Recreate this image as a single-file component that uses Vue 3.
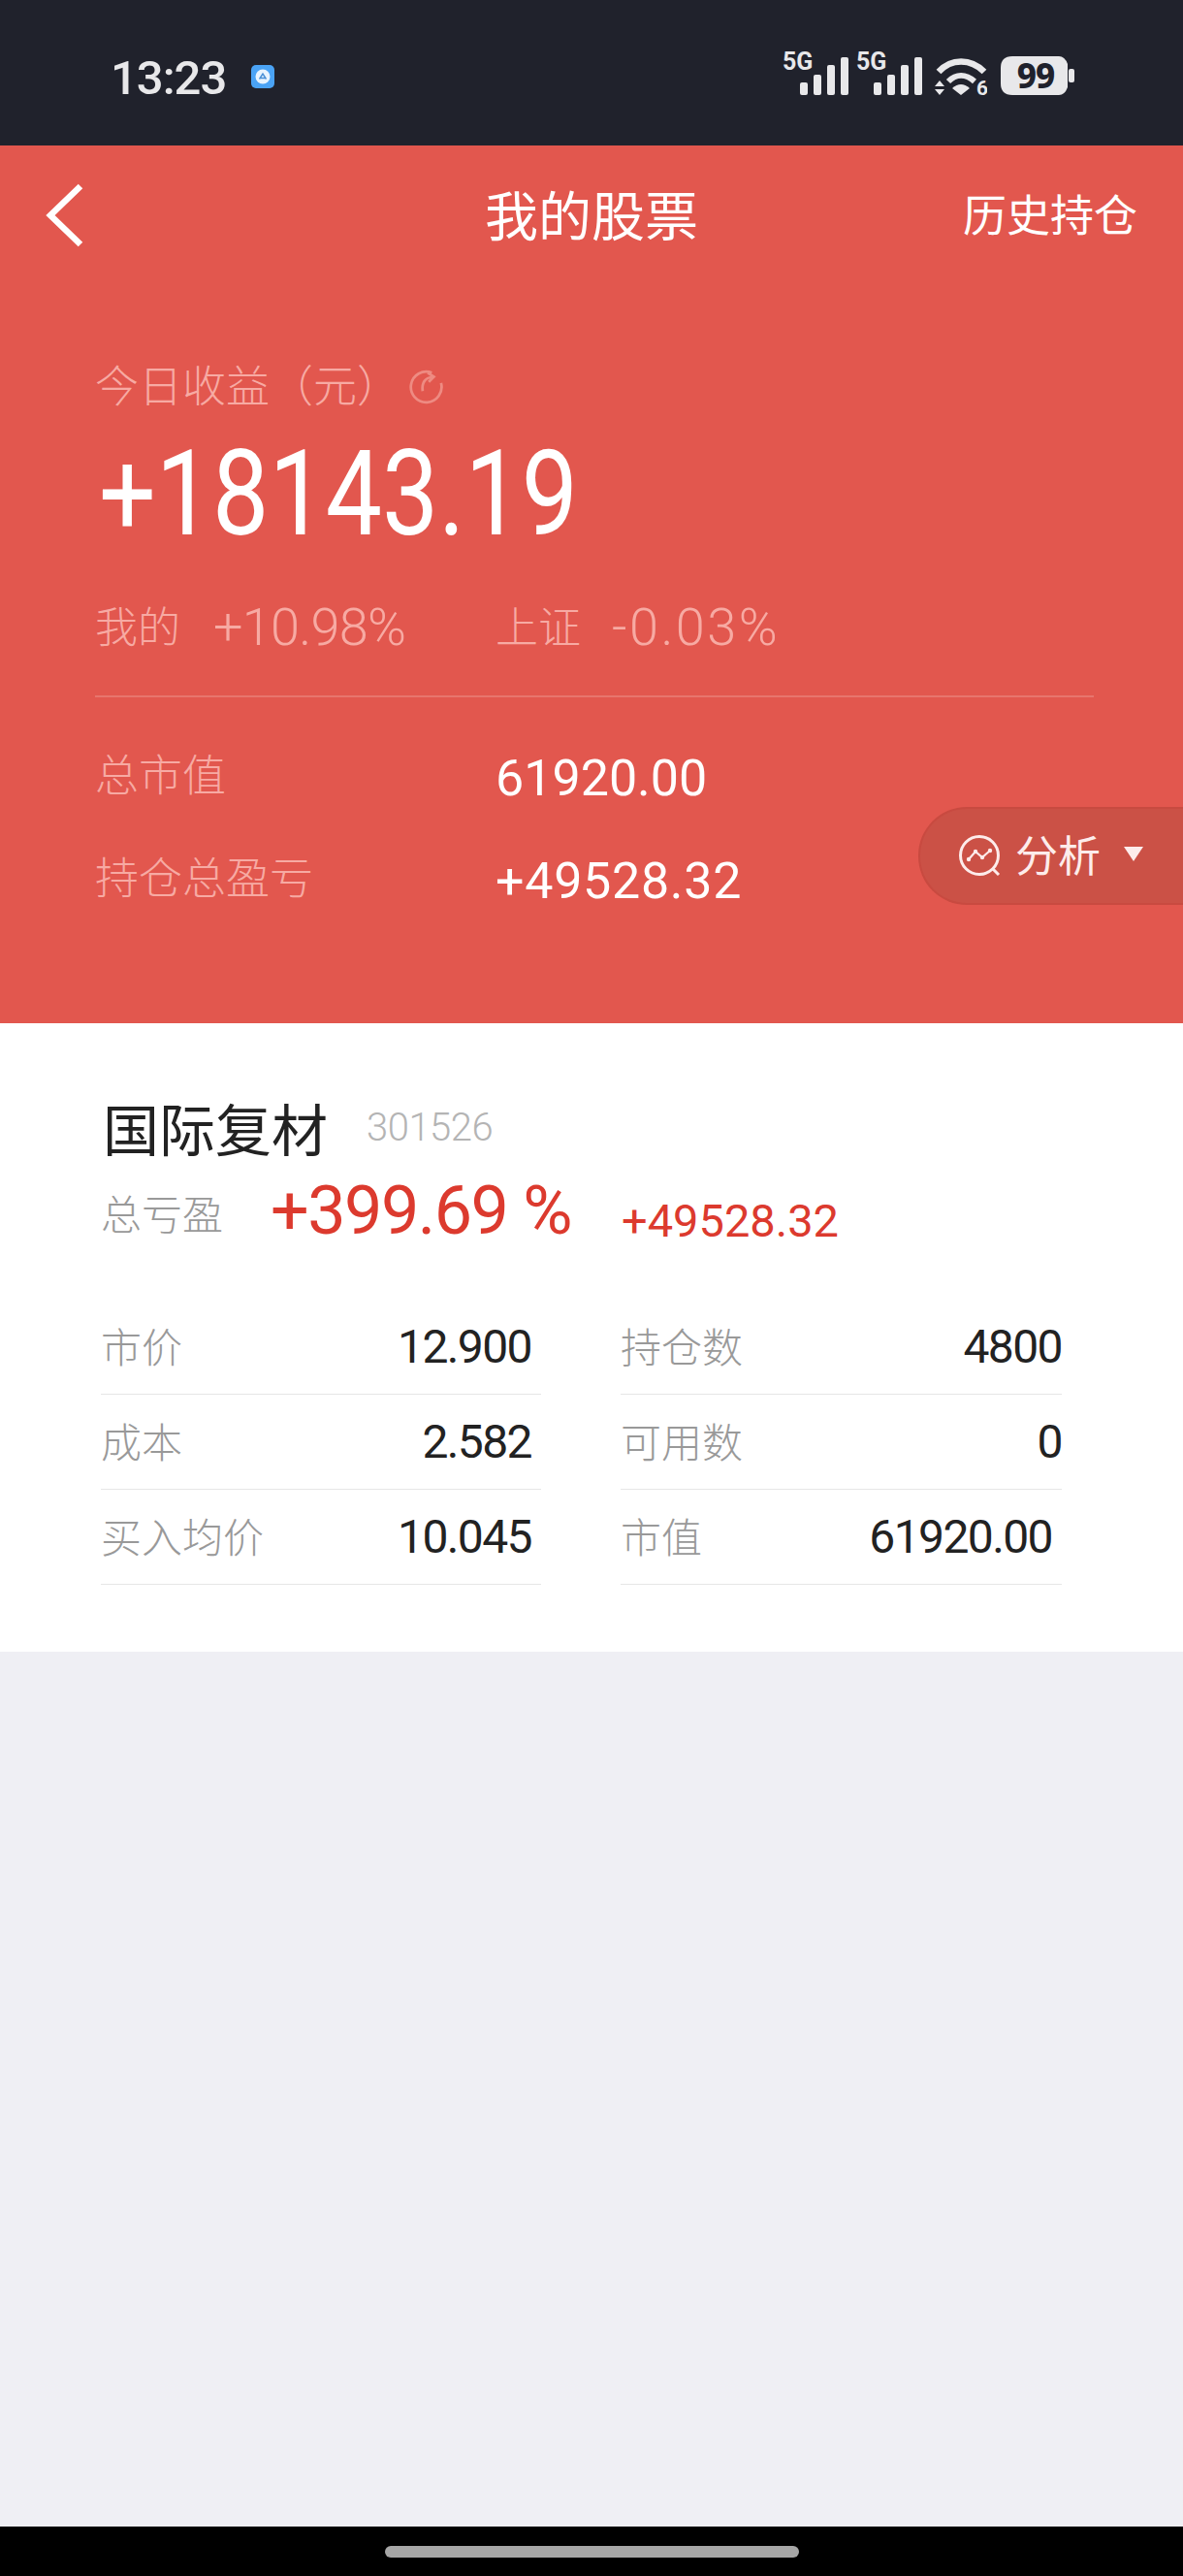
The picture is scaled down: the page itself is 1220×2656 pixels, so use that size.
<script setup>
const rows = [
  [{ k: '市价', v: '12.900' }, { k: '持仓数', v: '4800' }],
  [{ k: '成本', v: '2.582' }, { k: '可用数', v: '0' }],
  [{ k: '买入均价', v: '10.045' }, { k: '市值', v: '61920.00', inset: true }],
]
const cells = rows.flat()
const bars = [
  { x: 0, y: 26, h: 13 },
  { x: 14, y: 18, h: 21 },
  { x: 28, y: 8, h: 31 },
  { x: 42, y: 0, h: 39 },
]
</script>

<template>
  <div class="page">
    <header class="status">
      <div class="status-left">
        <span class="time">13:23</span>
        <svg class="app-icon" width="24" height="24" viewBox="0 0 24 24">
          <rect width="24" height="24" rx="5" fill="#4aa3f5" />
          <circle cx="12" cy="12" r="7.5" fill="#e8f4ff" />
          <path d="M8.5 14.5 L12 9 L15.5 14.5 M10 13.5 H15" fill="none" stroke="#4a90d6" stroke-width="1.4" />
        </svg>
      </div>
      <div class="status-right">
        <svg v-for="n in 2" :key="n" class="signal" width="68" height="68" viewBox="0 0 68 68">
          <text x="0" y="42" class="fiveg">5G</text>
          <g transform="translate(18 29)">
            <rect v-for="b in bars" :key="b.x" :x="b.x" :y="b.y" width="8" :height="b.h" rx="2" fill="#e8e8ea" />
          </g>
        </svg>
        <svg class="wifi" width="54" height="60" viewBox="0 0 54 60">
          <path d="M4 14 C17 0 37 0 51 14" fill="none" stroke="#e8e8ea" stroke-width="6.5" />
          <path d="M14 24 C22 16 32 16 41 24" fill="none" stroke="#e8e8ea" stroke-width="6" />
          <path d="M18 31 Q27 23 36 31 L27 38 Z" fill="#e8e8ea" />
          <path d="M5 23 L10 29 H0 Z M0 32 H10 L5 38 Z" fill="#e8e8ea" />
          <text x="43" y="38" class="wifi-six">6</text>
        </svg>
        <svg class="battery" width="76" height="68" viewBox="0 -14 76 68">
          <path d="M12 0 H60 Q66 0 69 8 V32 Q66 40 60 40 H12 Q0 40 0 28 V12 Q0 0 12 0 Z" fill="#e8e8ea" />
          <rect x="70" y="13" width="6" height="14" rx="2" fill="#e8e8ea" />
          <text x="36" y="33" text-anchor="middle" class="batt-text">99</text>
        </svg>
      </div>
    </header>

    <section class="hero">
      <nav class="nav">
        <svg class="back" width="40" height="66" viewBox="0 0 40 66">
          <path d="M36 3 L5 33 L36 63" fill="none" stroke="#fff" stroke-width="6.5" />
        </svg>
        <h1 class="title">我的股票</h1>
        <span class="history">历史持仓</span>
      </nav>

      <div class="summary">
        <div class="today">
          <span>今日收益（元）</span>
          <svg class="refresh" width="38" height="38" viewBox="0 0 36 36">
            <path d="M24 5 A15 15 0 1 0 33 15" fill="none" stroke="#ee8b82" stroke-width="2.6" />
            <path d="M15 23 C14 15 17 10 25 9 M20 5 L26 9 L21 14" fill="none" stroke="#ee8b82" stroke-width="2.6" />
          </svg>
        </div>
        <div class="big">+18143.19</div>
        <div class="compare">
          <span class="cmp-label">我的</span>
          <span class="cmp-mine">+10.98%</span>
          <span class="cmp-label cmp-index">上证</span>
          <span class="cmp-idx-val">-0.03%</span>
        </div>
        <div class="divider"></div>
        <div class="totals">
          <span class="tot-label">总市值</span>
          <span class="tot-value">61920.00</span>
          <span class="tot-label">持仓总盈亏</span>
          <span class="tot-value tot-wide">+49528.32</span>
        </div>
      </div>

      <div class="pill">
        <svg width="48" height="48" viewBox="0 0 48 48">
          <circle cx="23" cy="23" r="19.5" fill="none" stroke="#fdeceb" stroke-width="3" />
          <path d="M37 37 L43 43" stroke="#fdeceb" stroke-width="3" />
          <path d="M12 27 L19 19 L26 25 L34 18" fill="none" stroke="#fdeceb" stroke-width="2.2" />
          <circle cx="12" cy="27" r="2.2" fill="#fdeceb" />
          <circle cx="19" cy="19" r="2.2" fill="#fdeceb" />
          <circle cx="26" cy="25" r="2.2" fill="#fdeceb" />
          <circle cx="34" cy="18" r="2.2" fill="#fdeceb" />
        </svg>
        <span class="pill-text">分析</span>
        <span class="pill-caret"></span>
      </div>
    </section>

    <section class="stock">
      <div class="stock-head">
        <span class="stock-name">国际复材</span>
        <span class="stock-code">301526</span>
      </div>
      <div class="profit">
        <span class="profit-label">总亏盈</span>
        <span class="profit-pct">+399.69 %</span>
        <span class="profit-amt">+49528.32</span>
      </div>
      <div class="grid">
        <div v-for="c in cells" :key="c.k" class="cell">
          <span class="cell-key">{{ c.k }}</span>
          <span class="cell-val" :class="{ inset: c.inset }">{{ c.v }}</span>
        </div>
      </div>
    </section>

    <div class="filler"></div>

    <footer class="gesture">
      <span class="gesture-bar"></span>
    </footer>
  </div>
</template>

<style>
html, body { margin: 0; padding: 0; }
</style>

<style scoped>
.page {
  width: 1220px;
  height: 2656px;
  display: flex;
  flex-direction: column;
  font-family: Roboto, "Noto Sans CJK SC", sans-serif;
  background: #efeff4;
  overflow: hidden;
}
.status {
  height: 150px;
  flex: none;
  background: #20222c;
  display: flex;
  justify-content: space-between;
  padding: 0 112px 0 114px;
  box-sizing: border-box;
}
.status-left { display: flex; align-items: center; height: 160px; gap: 26px; }
.time { font-size: 49px; font-weight: 500; color: #e8e8ea; line-height: 1; letter-spacing: -1px; }
.app-icon { margin-top: -2px; }
.status-right { display: flex; align-items: flex-start; padding-top: 30px; }
.signal { margin-right: 8px; }
.fiveg { font: 700 25px Roboto, sans-serif; fill: #e8e8ea; }
.wifi { margin: 30px 0 0 5px; }
.wifi-six { font: 700 21px Roboto, sans-serif; fill: #e8e8ea; }
.battery { margin: 14px 0 0 14px; }
.batt-text { font: 800 35px "Noto Sans", sans-serif; fill: #20222c; letter-spacing: -1px; }

.hero {
  position: relative;
  height: 905px;
  flex: none;
  background: #e2574e;
  color: #fff;
}
.nav {
  height: 142px;
  display: grid;
  grid-template-columns: 1fr auto 1fr;
  align-items: center;
  padding: 0 47px;
}
.back { margin-top: 2px; }
.title { margin: -3px 0 0; font-size: 55px; font-weight: 400; font-family: "Noto Sans CJK SC", sans-serif; line-height: 1; }
.history { justify-self: end; margin-top: -3px; font-size: 45px; font-family: "Noto Sans CJK SC", sans-serif; line-height: 1; }
.summary { padding: 73px 92px 0 98px; font-family: Roboto, "Noto Sans CJK SC", sans-serif; }
.today {
  height: 60px;
  display: flex;
  align-items: center;
  font-size: 45px;
  font-weight: 300;
  font-family: "Noto Sans CJK SC", sans-serif;
  color: #f7aaa3;
}
.refresh { margin-left: 7px; margin-top: 6px; }
.big {
  margin-top: 20px;
  margin-bottom: -3px;
  height: 130px;
  line-height: 130px;
  font-size: 122px;
  font-weight: 400;
  margin-left: 4px;
  transform: scaleX(.85);
  transform-origin: left center;
  white-space: nowrap;
}
.compare {
  margin-top: 45px;
  height: 60px;
  line-height: 60px;
  display: flex;
  font-size: 54px;
  font-weight: 300;
  color: #f7aaa3;
}
.cmp-label { font-family: "Noto Sans CJK SC", sans-serif; font-size: 44px; width: 122px; margin-top: -3px; }
.cmp-mine { width: 291px; letter-spacing: -0.7px; }
.cmp-index { width: 120px; }
.cmp-idx-val { letter-spacing: 2.5px; }
.divider { margin-top: 40px; height: 2px; background: rgba(255, 255, 255, .18); }
.totals {
  margin-top: 51px;
  display: grid;
  grid-template-columns: 413px 1fr;
  row-gap: 43px;
  line-height: 60px;
}
.tot-label { font-family: "Noto Sans CJK SC", sans-serif; font-weight: 300; font-size: 45px; color: #f7aaa3; margin-top: -3px; }
.tot-value { font-size: 52px; font-weight: 400; color: #fff; margin-top: 3px; }
.tot-wide { letter-spacing: .7px; }
.pill {
  position: absolute;
  left: 947px;
  right: 0;
  top: 682px;
  height: 101px;
  box-sizing: border-box;
  display: flex;
  align-items: center;
  padding-left: 38px;
  background: #cb5146;
  border: 2px solid #c84a40;
  border-right: none;
  border-radius: 50px 0 0 50px;
}
.pill-text { font-size: 44px; font-family: "Noto Sans CJK SC", sans-serif; margin: -5px 0 0 12px; color: #fdeceb; line-height: 1; }
.pill-caret {
  margin: -4px 0 0 24px;
  width: 0;
  height: 0;
  border-left: 10px solid transparent;
  border-right: 10px solid transparent;
  border-top: 15px solid #fdeceb;
}

.stock {
  flex: none;
  background: #fff;
  height: 648px;
  box-sizing: border-box;
  padding: 72px 125px 0 104px;
}
.stock-head { height: 70px; display: flex; align-items: center; }
.stock-name { font-size: 58px; font-family: "Noto Sans CJK SC", sans-serif; color: #222; padding-left: 2px; line-height: 1; }
.stock-code { margin-left: 40px; font-size: 40px; font-weight: 300; color: #b4b4b4; letter-spacing: -.5px; }
.profit { margin-top: 11px; height: 80px; display: flex; align-items: center; }
.profit-label { font-size: 42px; font-weight: 300; font-family: "Noto Sans CJK SC", sans-serif; color: #999; width: 175px; padding-top: 2px; }
.profit-pct { font-size: 70px; color: #dc3a2e; width: 362px; font-weight: 400; letter-spacing: -1.5px; }
.profit-amt { font-size: 47px; color: #dc3a2e; margin-top: 20px; }
.grid {
  margin-top: 52px;
  display: grid;
  grid-template-columns: 454px 455px;
  column-gap: 82px;
}
.cell {
  height: 98px;
  box-sizing: border-box;
  border-bottom: 1px solid #e6e6e6;
  display: flex;
  justify-content: space-between;
  align-items: center;
  padding-bottom: 2px;
}
.cell:nth-child(odd) { padding-right: 10px; }
.cell-key { font-size: 42px; font-weight: 300; font-family: "Noto Sans CJK SC", sans-serif; color: #999; line-height: 1; margin-top: -2px; }
.cell-val { font-size: 48px; font-weight: 400; color: #222; line-height: 1; letter-spacing: -1.6px; margin-top: 3px; }
.inset { padding-right: 10px; }
.filler { flex: 1; }
.gesture {
  height: 51px;
  flex: none;
  background: #000;
  display: flex;
  justify-content: center;
  align-items: center;
}
.gesture-bar { width: 427px; height: 12px; border-radius: 6px; background: #a6a6a6; }
</style>
